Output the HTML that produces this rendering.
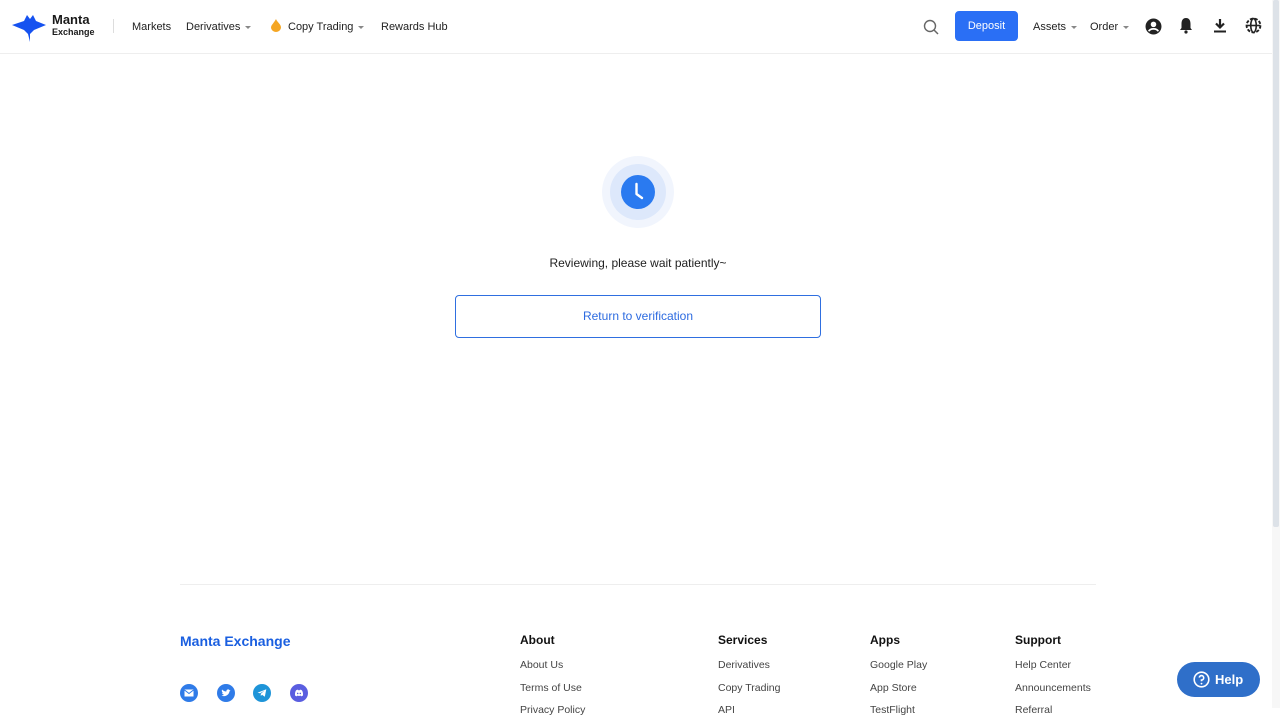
<!DOCTYPE html>
<html><head><meta charset="utf-8"><style>
*{margin:0;padding:0;box-sizing:border-box}
body{width:1280px;height:708px;overflow:hidden;background:#fff;font-family:"Liberation Sans",sans-serif;color:#1a1a1a;position:relative}
.hdr{position:absolute;left:0;top:0;width:1272px;height:54px;border-bottom:1px solid #eee}
.a{position:absolute;font-size:11px;color:#222;top:21px}
.car{display:inline-block;border-left:3px solid transparent;border-right:3px solid transparent;border-top:3px solid #888;vertical-align:middle;margin-left:5px}
.sb{position:absolute;right:0;top:0;width:8px;height:708px;background:#f7f7f7}
.sb div{position:absolute;left:1px;top:0;width:6px;height:527px;background:#dde2e8;border-radius:2px}
.f{position:absolute;font-size:10.5px;color:#444}
.fh{position:absolute;font-size:12px;font-weight:bold;color:#111}
.ic{position:absolute;top:684px;width:18px;height:18px;border-radius:50%}
</style></head><body>
<div class="hdr">
<svg style="position:absolute;left:12px;top:12px" width="36" height="30" viewBox="0 0 36 30"><path d="M0 13 L12 9 L15 3 L18 7 L21 3 L24 9 L34 13 L22 18 L18 22 L18 30 L16 22 L12 18 Z" fill="#1652f0"/></svg>
<div style="position:absolute;left:52px;top:13px;font-size:13px;font-weight:bold;line-height:14px">Manta</div>
<div style="position:absolute;left:52px;top:27px;font-size:9px;font-weight:bold">Exchange</div>
<div style="position:absolute;left:113px;top:19px;width:1px;height:14px;background:#ddd"></div>
<div class="a" style="left:132px">Markets</div>
<div class="a" style="left:186px">Derivatives<span class="car"></span></div>
<svg style="position:absolute;left:271px;top:19px" width="10" height="13" viewBox="0 0 10 13"><path d="M5 0C6 3 10 5 10 8.5A5 4.5 0 0 1 0 8.5C0 6 3 4 5 0Z" fill="#f5a623"/></svg>
<div class="a" style="left:288px">Copy Trading<span class="car"></span></div>
<div class="a" style="left:381px">Rewards Hub</div>
<svg style="position:absolute;left:923px;top:19px" width="16" height="16" viewBox="0 0 16 16"><circle cx="7" cy="7" r="5.5" stroke="#666" stroke-width="1.4" fill="none"/><path d="M11 11L15 15" stroke="#666" stroke-width="1.5"/></svg>
<div style="position:absolute;left:955px;top:11px;width:63px;height:30px;background:#2a6ff5;border-radius:4px;color:#fff;font-size:11px;text-align:center;line-height:31px">Deposit</div>
<div class="a" style="left:1033px">Assets<span class="car"></span></div>
<div class="a" style="left:1090px">Order<span class="car"></span></div>
<svg style="position:absolute;left:1145px;top:18px" width="17" height="17" viewBox="0 0 16 16"><circle cx="8" cy="8" r="7.5" fill="#222"/><circle cx="8" cy="6" r="2.6" fill="#fff"/><path d="M3.5 12.5C5 9.5 11 9.5 12.5 12.5" stroke="#fff" stroke-width="1.6" fill="none"/></svg>
<svg style="position:absolute;left:1178px;top:17px" width="16" height="17" viewBox="0 0 16 17"><path d="M8 1C4.5 1 3.5 4 3.5 7V11L2 13H14L12.5 11V7C12.5 4 11.5 1 8 1Z" fill="#222"/><circle cx="8" cy="15" r="1.6" fill="#222"/></svg>
<svg style="position:absolute;left:1213px;top:18px" width="14" height="15" viewBox="0 0 14 15"><path d="M7 1V9M3 5.5L7 9.5L11 5.5" stroke="#222" stroke-width="2.2" fill="none"/><path d="M1 13.5H13" stroke="#222" stroke-width="2"/></svg>
<svg style="position:absolute;left:1245px;top:17px" width="17" height="17" viewBox="0 0 16 16"><circle cx="8" cy="8" r="6.5" stroke="#222" stroke-width="1.8" fill="none" stroke-dasharray="3 1.5"/><ellipse cx="8" cy="8" rx="2.6" ry="6.5" stroke="#222" stroke-width="1.5" fill="none"/><path d="M1.5 8H14.5" stroke="#222" stroke-width="1.5"/></svg>
</div>
<div class="sb"><div></div></div>
<div style="position:absolute;left:602px;top:156px;width:72px;height:72px;border-radius:50%;background:#f1f5fd"></div>
<div style="position:absolute;left:610px;top:164px;width:56px;height:56px;border-radius:50%;background:#dde8fb"></div>
<svg style="position:absolute;left:620px;top:174px" width="36" height="36" viewBox="0 0 36 36"><circle cx="18" cy="18" r="17" fill="#2a7af0"/><path d="M16.5 10V20L22 24" stroke="#fff" stroke-width="2.4" fill="none" stroke-linecap="round" stroke-linejoin="round"/></svg>
<div style="position:absolute;left:0;width:1276px;top:256px;text-align:center;font-size:12px;color:#222">Reviewing, please wait patiently~</div>
<div style="position:absolute;left:455px;top:295px;width:366px;height:43px;border:1px solid #2f6fe0;border-radius:4px;text-align:center;line-height:41px;font-size:12px;color:#2d6be0">Return to verification</div>
<div style="position:absolute;left:180px;top:584px;width:916px;height:1px;background:#eee"></div>
<div style="position:absolute;left:180px;top:633px;font-size:14px;font-weight:bold;color:#1a5fe0">Manta Exchange</div>
<div class="ic" style="left:180px;background:#2f7be8"></div>
<div class="ic" style="left:217px;background:#2f7be8"></div>
<div class="ic" style="left:253px;background:#1e94d8"></div>
<div class="ic" style="left:290px;background:#5a5ee0"></div>
<svg style="position:absolute;left:184px;top:689px" width="10" height="8"><rect x="0.5" y="0.5" width="9" height="7" fill="#fff"/><path d="M0.5 1L5 4.5L9.5 1" stroke="#2f7be8" fill="none"/></svg>
<svg style="position:absolute;left:221px;top:688px" width="10" height="10" viewBox="0 0 10 10"><path d="M0.5 7.5C3 9 7.5 8 8.5 3.5L9.5 2L8.5 2.2C8 1 6 1 5.5 2.5L5.3 3.5C3.5 3.5 2 2.5 1 1.5C0.5 3 1 4.5 2 5L1 5C1.5 6 2 6.5 3 6.8C2.3 7.3 1.5 7.5 0.5 7.5Z" fill="#fff"/></svg>
<svg style="position:absolute;left:257px;top:688px" width="10" height="10" viewBox="0 0 10 10"><path d="M0.5 4.8L9.3 1.2L7.8 8.8L5 6.7L3.8 8V5.8L7.5 2.6L3 5.3Z" fill="#fff"/></svg>
<svg style="position:absolute;left:294px;top:689px" width="10" height="8" viewBox="0 0 10 8"><path d="M1 6.5C0.8 4 1.3 2 2.5 1L4 0.6L4.3 1.2H5.7L6 0.6L7.5 1C8.7 2 9.2 4 9 6.5L7.3 7.4L6.8 6.6C5.6 7 4.4 7 3.2 6.6L2.7 7.4Z" fill="#fff"/><circle cx="3.7" cy="4.4" r="0.8" fill="#5a5ee0"/><circle cx="6.3" cy="4.4" r="0.8" fill="#5a5ee0"/></svg>
<div class="fh" style="left:520px;top:633px">About</div>
<div class="f" style="left:520px;top:659px">About Us</div>
<div class="f" style="left:520px;top:682px">Terms of Use</div>
<div class="f" style="left:520px;top:704px">Privacy Policy</div>
<div class="fh" style="left:718px;top:633px">Services</div>
<div class="f" style="left:718px;top:659px">Derivatives</div>
<div class="f" style="left:718px;top:682px">Copy Trading</div>
<div class="f" style="left:718px;top:704px">API</div>
<div class="fh" style="left:870px;top:633px">Apps</div>
<div class="f" style="left:870px;top:659px">Google Play</div>
<div class="f" style="left:870px;top:682px">App Store</div>
<div class="f" style="left:870px;top:704px">TestFlight</div>
<div class="fh" style="left:1015px;top:633px">Support</div>
<div class="f" style="left:1015px;top:659px">Help Center</div>
<div class="f" style="left:1015px;top:682px">Announcements</div>
<div class="f" style="left:1015px;top:704px">Referral</div>
<div style="position:absolute;left:1177px;top:662px;width:83px;height:35px;border-radius:18px;background:#2f6fc9;color:#fff;font-weight:bold;font-size:13px;line-height:35px;padding-left:38px">Help</div>
<svg style="position:absolute;left:1193px;top:671px" width="17" height="17" viewBox="0 0 17 17"><circle cx="8.5" cy="8.5" r="7.3" stroke="#fff" stroke-width="1.6" fill="none"/><path d="M6.3 6.6A2.2 2.2 0 1 1 8.5 9V10.3" stroke="#fff" stroke-width="1.6" fill="none"/><circle cx="8.5" cy="12.6" r="0.9" fill="#fff"/></svg>
</body></html>
